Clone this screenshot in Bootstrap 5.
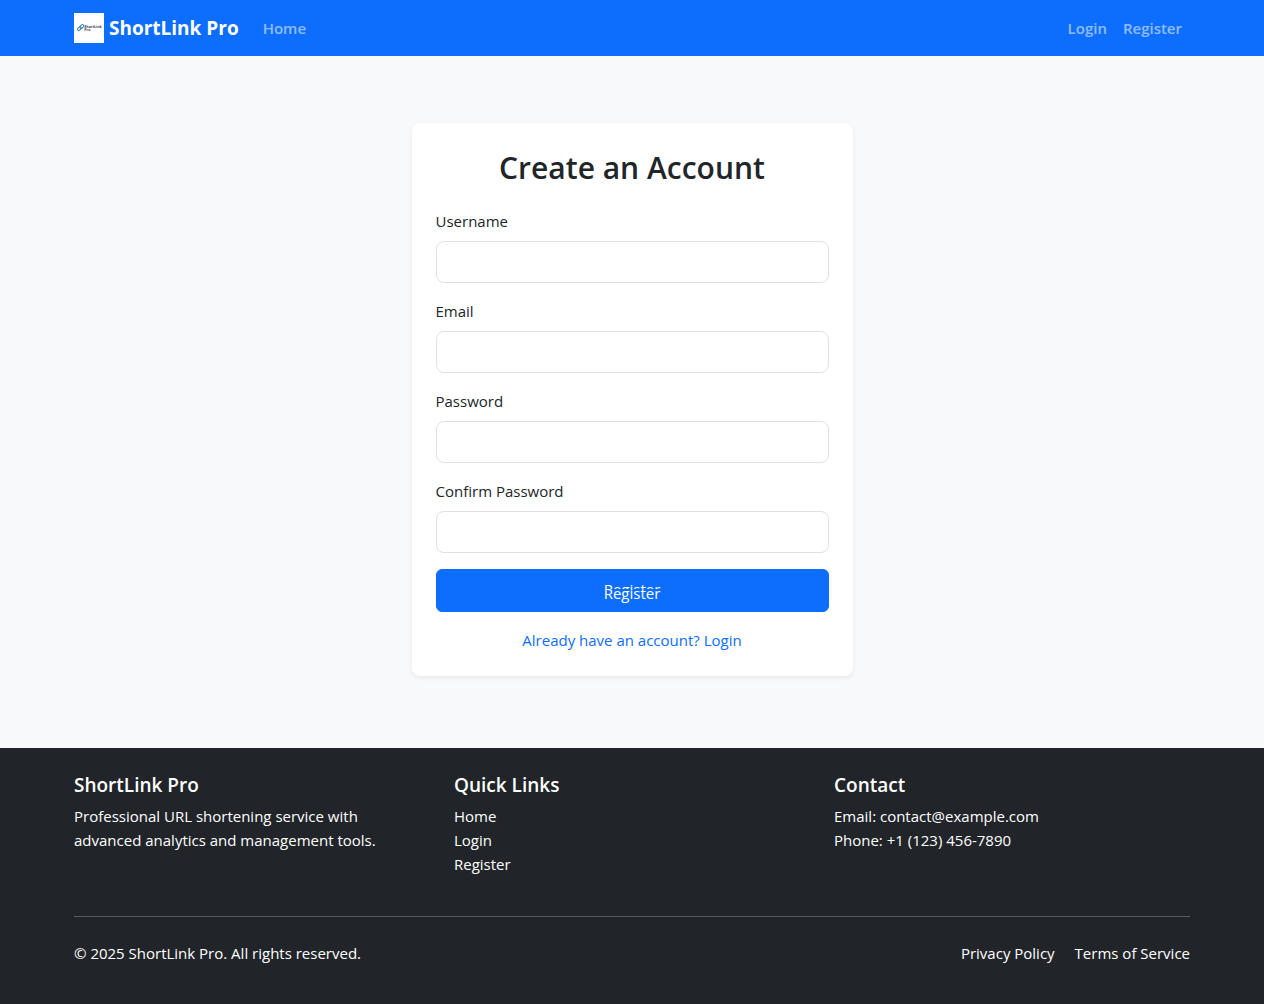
<!DOCTYPE html>
<html lang="en">
<head>
<meta charset="utf-8">
<meta name="viewport" content="width=device-width, initial-scale=1">
<title>Register - ShortLink Pro</title>
<link href="https://cdn.jsdelivr.net/npm/bootstrap@5.3.0/dist/css/bootstrap.min.css" rel="stylesheet">
<style>
body { font-family: "Open Sans", "Noto Sans", sans-serif; font-size: 15px; line-height: 24px; background: #f8f9fa; }
.site-nav { min-height: 56px; }
.site-nav .navbar-brand { font-size: 19px; line-height: 30px; gap: 5px; }
.site-nav .nav-link { font-weight: 600; }
.brand-logo { width: 30px; height: 30px; }
.page-body { padding-top: 67px; padding-bottom: 72px; }
.auth-card { max-width: 441px; border-radius: 8px; }
.auth-title { font-size: 30px; line-height: 42px; font-weight: 600; margin-bottom: 20px; }
.auth-card .form-control { height: 42px; border-radius: 8px; }
.auth-submit { height: 43px; font-size: 15px; line-height: 24px; border-radius: 6px; padding-top: 11px; }
.auth-submit .label-echo { left: 0; right: 0; top: 7px; height: 12px; overflow: hidden; }
.site-footer h5 { font-size: 19px; line-height: 26px; font-weight: 600; margin-bottom: 6px; }
.footer-about { max-width: 320px; }
.footer-rule { border-color: #fff; opacity: .25; }
.footer-legal { gap: 20px; }
</style>
<script src="https://cdn.jsdelivr.net/npm/bootstrap@5.3.0/dist/js/bootstrap.bundle.min.js" defer></script>
</head>
<body class="d-flex flex-column min-vh-100">
<nav class="navbar navbar-expand navbar-dark bg-primary site-nav py-0">
  <div class="container">
    <a class="navbar-brand fw-bold d-flex align-items-center me-3" href="#">
      <svg class="brand-logo" viewBox="0 0 30 30" aria-hidden="true">
        <rect width="30" height="30" fill="#fff"/>
        <g fill="none" stroke="#3b82b8" stroke-width="1">
          <rect x="3.2" y="14.3" width="4.4" height="2.6" rx="1.3" transform="rotate(-45 5.4 15.6)"/>
          <rect x="5.6" y="12.2" width="4.4" height="2.6" rx="1.3" transform="rotate(-45 7.8 13.5)"/>
        </g>
        <g fill="#37424d" font-family="Open Sans, sans-serif" font-size="3.6" font-weight="700">
          <text x="10.3" y="14.8">ShortLink</text>
          <text x="10.3" y="18.2">Pro</text>
        </g>
      </svg>
      <span>ShortLink Pro</span>
    </a>
    <ul class="navbar-nav me-auto">
      <li class="nav-item"><a class="nav-link" href="#">Home</a></li>
    </ul>
    <ul class="navbar-nav">
      <li class="nav-item"><a class="nav-link" href="#">Login</a></li>
      <li class="nav-item"><a class="nav-link" href="#">Register</a></li>
    </ul>
  </div>
</nav>

<main class="container page-body flex-grow-1">
  <div class="auth-card bg-white shadow-sm p-4 mx-auto">
    <h2 class="auth-title text-center">Create an Account</h2>
    <form>
      <div class="mb-3">
        <label class="d-block mb-2" for="username">Username</label>
        <input class="form-control" type="text" id="username">
      </div>
      <div class="mb-3">
        <label class="d-block mb-2" for="email">Email</label>
        <input class="form-control" type="email" id="email">
      </div>
      <div class="mb-3">
        <label class="d-block mb-2" for="password">Password</label>
        <input class="form-control" type="password" id="password">
      </div>
      <div class="mb-3">
        <label class="d-block mb-2" for="confirm">Confirm Password</label>
        <input class="form-control" type="password" id="confirm">
      </div>
      <button class="btn btn-primary auth-submit w-100 position-relative d-block" type="submit">Register<span class="label-echo position-absolute" aria-hidden="true">Register</span></button>
    </form>
    <div class="text-center mt-3"><a class="text-decoration-none" href="#">Already have an account? Login</a></div>
  </div>
</main>

<footer class="site-footer bg-dark text-white py-4">
  <div class="container">
    <div class="row">
      <div class="col-md-4">
        <h5>ShortLink Pro</h5>
        <p class="footer-about mb-3">Professional URL shortening service with advanced analytics and management tools.</p>
      </div>
      <div class="col-md-4">
        <h5>Quick Links</h5>
        <ul class="list-unstyled mb-3">
          <li><a class="text-white text-decoration-none" href="#">Home</a></li>
          <li><a class="text-white text-decoration-none" href="#">Login</a></li>
          <li><a class="text-white text-decoration-none" href="#">Register</a></li>
        </ul>
      </div>
      <div class="col-md-4">
        <h5>Contact</h5>
        <p class="mb-3">Email: contact@example.com<br>Phone: +1 (123) 456-7890</p>
      </div>
    </div>
    <hr class="footer-rule my-4">
    <div class="d-flex flex-wrap justify-content-between">
      <p class="mb-3">© 2025 ShortLink Pro. All rights reserved.</p>
      <div class="d-flex footer-legal">
        <a class="text-white text-decoration-none" href="#">Privacy Policy</a>
        <a class="text-white text-decoration-none" href="#">Terms of Service</a>
      </div>
    </div>
  </div>
</footer>
</body>
</html>
